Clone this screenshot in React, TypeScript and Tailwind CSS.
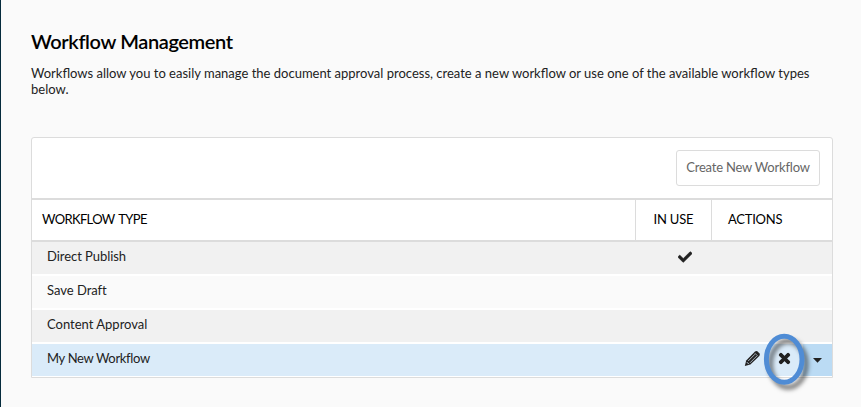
import { FaCheck, FaTimes } from "react-icons/fa";

const rows = [
  { name: "Direct Publish", bg: "bg-[#f1f1f1]", spacing: "tracking-[-0.05px]", inUse: true },
  { name: "Save Draft", bg: "bg-[#fafafa]", spacing: "tracking-[-0.02px]" },
  { name: "Content Approval", bg: "bg-[#f1f1f1]", spacing: "tracking-[0px]" },
  { name: "My New Workflow", bg: "bg-[#daebf9]", spacing: "tracking-[-0.33px]", selected: true },
];

function Pencil() {
  return (
    <svg width="17" height="17" viewBox="0 0 17 17" fill="none">
      <path d="M.8 15.9 2.2 10.4 11 1.6Q12.4 .4 13.7 1.6L15.3 3.3Q16.5 4.6 15.3 5.9L6.4 14.6Z" fill="#222" />
      <path d="M4.2 11 11 4.2M6 12.8 12.8 6" stroke="#daebf9" strokeWidth=".75" />
      <path d="M2.9 12.2 4.8 14.1" stroke="#daebf9" strokeWidth=".9" />
      <path d="M10.8 3.1 13.9 6.2" stroke="#daebf9" strokeWidth=".6" />
    </svg>
  );
}

function SelectedActions() {
  return (
    <>
      <div className="mt-[6px] ml-[32px]">
        <Pencil />
      </div>
      <div className="relative mt-[7px] ml-[16px] h-[15px] w-[15px]">
        <FaTimes size={15} className="text-[#222]" strokeWidth={35} stroke="#222" />
        <svg className="absolute -top-[21px] -left-[21px]" width="60" height="66" viewBox="0 0 60 66" fill="none">
          <ellipse cx="28.2" cy="29.3" rx="17.8" ry="23" stroke="#4f8cd5" strokeWidth="5" className="drop-shadow-[4px_5px_2px_rgba(0,0,0,0.5)]" />
        </svg>
      </div>
      <div className="ml-auto flex h-full w-[29px] justify-center bg-[#bbdbf4] pt-[14px]">
        <svg width="9" height="5" viewBox="0 0 9 5">
          <path d="M0 0H9L4.5 4.8Z" fill="#222" />
        </svg>
      </div>
    </>
  );
}

export default function App() {
  return (
    <div className="h-[407px] w-[861px] overflow-hidden border-l border-[#052b3c] bg-[#fafafa] pl-[30px] font-['Lato','Open_Sans',sans-serif] text-[13px] text-[#222]">
      <h1 className="pt-[28px] text-[20px] leading-[26px] font-semibold tracking-[-0.38px] text-black">Workflow Management</h1>
      <p className="mt-[11px] leading-4 whitespace-nowrap">
        <span className="tracking-[0px]">Workflows allow you to easily manage the document approval process, create a new workflow or use one of the available workflow types</span>
        <br />
        below.
      </p>
      <section className="mt-10 flex h-[241px] w-[802px] flex-col rounded-t-[3px] border border-[#dcdcdc] bg-white">
        <div className="flex h-[60px] shrink-0 justify-end pt-3 pr-3">
          <button className="h-9 w-[144px] rounded-[3px] border border-[#dcdcdc] tracking-[-0.2px] whitespace-nowrap text-[#666]">Create New Workflow</button>
        </div>
        <div className="flex h-11 shrink-0 border-y-2 border-[#dcdcdc] leading-[39px] text-black">
          <div className="w-[603px] pl-[10px] tracking-[-0.65px] [word-spacing:1.5px]">WORKFLOW TYPE</div>
          <div className="w-[77px] border-x border-[#dcdcdc] text-center tracking-[-0.2px]">IN USE</div>
          <div className="pl-4 tracking-[-0.25px]">ACTIONS</div>
        </div>
        <div className="flex flex-col gap-[2px]">
          {rows.map((row) => (
            <div key={row.name} className={`flex h-8 ${row.bg}`}>
              <div className={`w-[603px] pl-[15px] leading-[29px] ${row.spacing}`}>{row.name}</div>
              <div className="flex w-[77px] justify-center pt-[8px] pl-[22px]">
                {row.inUse && <FaCheck size={14} className="text-[#222]" stroke="#222" strokeWidth={20} />}
              </div>
              <div className="flex flex-1 items-start">{row.selected && <SelectedActions />}</div>
            </div>
          ))}
        </div>
      </section>
    </div>
  );
}
